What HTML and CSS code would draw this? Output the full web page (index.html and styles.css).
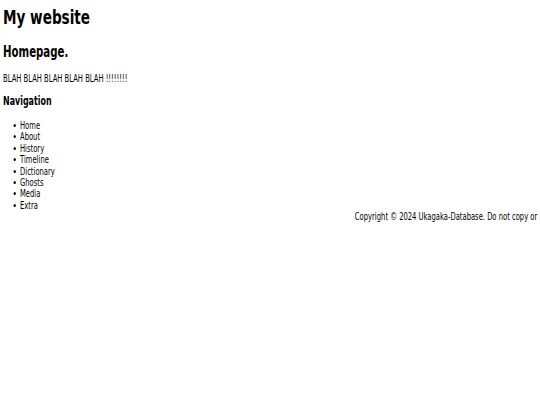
FILE: index.html
```html
<!DOCTYPE html>
<html>
<head>
<meta charset="utf-8">
<title>My website</title>
<link rel="stylesheet" href="styles.css">
</head>
<body>
<div class="page">
<header class="site-header">
<h1 class="site-title">My website</h1>
</header>
<main class="content">
<h2 class="page-title">Homepage.</h2>
<p class="blurb">BLAH BLAH BLAH BLAH BLAH !!!!!!!!</p>
<nav class="nav">
<h3 class="nav-title">Navigation</h3>
<ul class="nav-list">
<li>Home</li>
<li>About</li>
<li>History</li>
<li>Timeline</li>
<li>Dictionary</li>
<li>Ghosts</li>
<li>Media</li>
<li>Extra</li>
</ul>
</nav>
</main>
<footer class="footer">Copyright © 2024 Ukagaka-Database. Do not copy or redistribute without permission.</footer>
</div>
</body>
</html>
```
FILE: styles.css
```css
html, body { margin: 0; padding: 0; background: #fff; }
body {
  font-family: "DejaVu Sans Condensed", "DejaVu Sans", sans-serif;
  font-size: 10px;
  color: #000;
  overflow: hidden;
  width: 540px;
  height: 405px;
}
.page {
  width: 715px;
  padding: 0 4px;
  box-sizing: border-box;
  transform: scaleX(0.755);
  transform-origin: 0 0;
  display: flow-root;
}
.site-title { font-size: 20px; margin: 6px 0 0; line-height: 23px; }
.page-title { font-size: 15px; margin: 14px 0 0; line-height: 18px; }
.blurb { margin: 12px 0 0; line-height: 12px; }
.nav-title { font-size: 11.7px; margin: 9px 0 0; line-height: 14px; }
.nav-list { margin: 12px 0 0; padding-left: 13.5px; list-style: none; line-height: 11.4px; }
.nav-list li::before {
  content: "";
  display: inline-block;
  width: 3px;
  height: 3px;
  border-radius: 50%;
  background: #000;
  margin-right: 6px;
  vertical-align: 2px;
}
.footer { padding-left: 466px; white-space: nowrap; line-height: 12px; }
```
